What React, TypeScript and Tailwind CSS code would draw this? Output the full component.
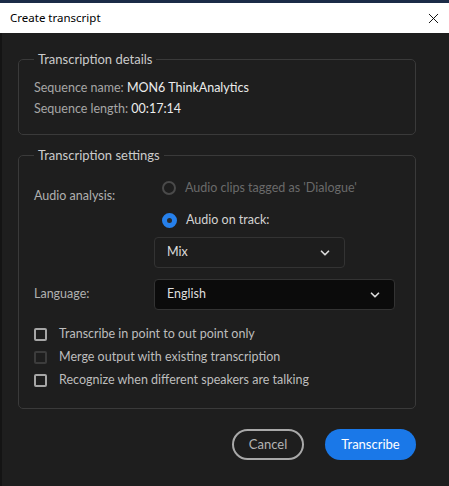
import { ChevronDown, X } from "lucide-react";

const font = { fontFamily: "Lato, 'Noto Sans', sans-serif" };

function Radio({ checked, label, disabled }: { checked?: boolean; label: string; disabled?: boolean }) {
  return (
    <div className="flex items-center h-6 pl-2">
      {checked ? (
        <span className="w-[15px] h-[15px] rounded-full border-[5px] border-[#2680eb] bg-[#2a2a2a]" />
      ) : (
        <span className="w-[14px] h-[14px] rounded-full border-2 border-[#4a4a4a]" />
      )}
      <span className={`ml-[9px] ${disabled ? "text-[#6a6a6a]" : "text-[#d2d2d2]"}`}>{label}</span>
    </div>
  );
}

function Select({ value, width, dark }: { value: string; width: string; dark?: boolean }) {
  return (
    <div
      className={`${width} h-[31px] flex items-center justify-between pl-3 pr-3 rounded-[4px] border border-[#333] ${
        dark ? "bg-[#0b0b0b]" : "bg-[#1d1d1d]"
      }`}
    >
      <span className="text-[#dedede]">{value}</span>
      <ChevronDown size={14} strokeWidth={3} className="text-[#d8d8d8]" />
    </div>
  );
}

function Check({ label, dim }: { label: string; dim?: boolean }) {
  return (
    <div className="flex items-center h-[23px]">
      <span className={`w-[13px] h-[13px] rounded-[2px] border-2 ${dim ? "border-[#3c3c3c]" : "border-[#a6a6a6]"}`} />
      <span className="ml-[12px] text-[#bdbdbd]">{label}</span>
    </div>
  );
}

export default function App() {
  return (
    <div className="w-[449px] h-[486px] flex flex-col bg-[#1e1e1e] overflow-hidden text-[12.5px]" style={font}>
      <div className="h-[3px] bg-[#1b2b47]" />
      <div className="h-[30px] bg-white flex items-center justify-between pl-[10px] pr-[7px]">
        <span className="text-[11.5px] text-black" style={{ fontFamily: "'Noto Sans', sans-serif" }}>
          Create transcript
        </span>
        <X size={17} strokeWidth={1.3} className="text-black" />
      </div>

      <div className="flex-1 border-l-2 border-[#141414] pl-[16px] pr-[33px] pt-[17px]">
        <fieldset className="border border-[#3a3a3a] rounded-[5px] px-[15px] pb-[15px]">
          <legend className="ml-0 px-[4px] leading-[18px] text-[13px] text-[#cbcbcb]">Transcription details</legend>
          <div className="pt-[9px] leading-[21px]">
            <div className="text-[#a6a6a6]">
              Sequence name: <span className="text-[#ececec]">MON6 ThinkAnalytics</span>
            </div>
            <div className="text-[#a6a6a6]">
              Sequence length: <span className="text-[#ececec]">00:17:14</span>
            </div>
          </div>
        </fieldset>

        <fieldset className="mt-[11px] border border-[#3a3a3a] rounded-[5px] px-[15px] pb-[16px]">
          <legend className="ml-0 px-[4px] leading-[18px] text-[13px] text-[#cbcbcb]">Transcription settings</legend>
          <div className="pt-[12px] grid grid-cols-[120px_1fr]">
            <div className="pt-[12px] text-[#b0b0b0] leading-4">Audio analysis:</div>
            <div className="flex flex-col">
              <Radio label="Audio clips tagged as 'Dialogue'" disabled />
              <div className="mt-[8px]">
                <Radio label="Audio on track:" checked />
              </div>
              <div className="mt-[5px]">
                <Select value="Mix" width="w-[191px]" />
              </div>
            </div>
            <div className="mt-[11px] flex items-center text-[#b0b0b0]">Language:</div>
            <div className="mt-[11px]">
              <Select value="English" width="w-[241px]" dark />
            </div>
          </div>
          <div className="mt-[13px] flex flex-col">
            <Check label="Transcribe in point to out point only" />
            <Check label="Merge output with existing transcription" dim />
            <Check label="Recognize when different speakers are talking" />
          </div>
        </fieldset>

        <div className="flex justify-end gap-[21px] mt-[20px]">
          <button className="w-[72px] h-[31px] rounded-full border-2 border-[#a9a9a9] text-[#b4b4b4] text-[13px]">
            Cancel
          </button>
          <button className="w-[91px] h-[31px] rounded-full bg-[#1a78e8] text-white text-[13px]">Transcribe</button>
        </div>
      </div>
    </div>
  );
}
